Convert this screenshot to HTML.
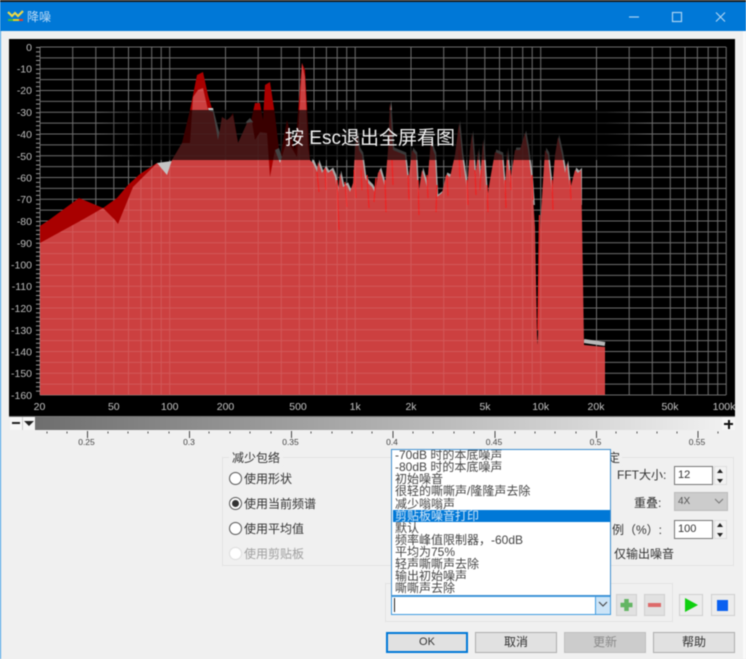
<!DOCTYPE html>
<html><head><meta charset="utf-8">
<style>
html,body{margin:0;padding:0;width:746px;height:659px;overflow:hidden;background:#f0f0f0}
body{position:relative;font-family:"Liberation Sans","Noto Sans CJK SC",sans-serif;font-size:12px;color:#333}
#w{position:absolute;left:0;top:0;width:746px;height:659px;filter:blur(.6px)}
.a{position:absolute;white-space:nowrap}
.r{position:absolute;left:229px;width:11px;height:11px;border:1.3px solid #555;border-radius:50%;background:#fff}
.l{position:absolute;left:244px;font-size:12px;line-height:14px;color:#333;white-space:nowrap}
.it{position:absolute;left:1px;width:218px;height:13px;line-height:13px;font-size:12px;padding-left:2px;color:#444;white-space:nowrap}
.b{position:absolute;top:632px;height:19px;width:80px;background:#e1e1e1;border:1px solid #adadad;text-align:center;line-height:19px;font-size:12px;color:#333}
.sq{position:absolute;top:594px;background:#e1e1e1;border:1px solid #cfcfcf;box-sizing:border-box;height:22px}
.sp{position:absolute;left:714px;width:13px;height:19px;background:#f2f2f2;border:1px solid #ddd;box-sizing:border-box}
.in{position:absolute;left:674px;width:39px;height:19px;background:#fff;border:1px solid #777;box-sizing:border-box;font-size:11px;line-height:17px;padding-left:3px;color:#333}
</style></head>
<body><div id="w">
<div class="a" style="left:0;top:0;width:746px;height:2px;background:#1c1c1c"></div>
<div class="a" style="left:0;top:2px;width:746px;height:29px;background:#0078d7"></div>
<div class="a" style="left:0;top:31px;width:1px;height:628px;background:#3f9fe8"></div>
<div class="a" style="left:743px;top:31px;width:3px;height:628px;background:#fafafa"></div>
<svg class="a" style="left:7px;top:9px" width="18" height="15" viewBox="0 0 18 15"><path d="M1 3 L5 7 L8 4 L11 7 L16 2" fill="none" stroke="#e8d84a" stroke-width="2.2"/><path d="M1 11 H6" stroke="#3fbf3f" stroke-width="2"/><path d="M6 11 H12" stroke="#e8d020" stroke-width="2"/><path d="M12 11 H16" stroke="#e04030" stroke-width="2"/></svg>
<div class="a" style="left:27px;top:9px;color:#b9d9f4;font-size:12px;line-height:16px">降噪</div>
<svg class="a" style="left:620px;top:8px" width="120" height="18" viewBox="0 0 120 18"><g fill="none" stroke="#a9d3f3" stroke-width="1.2"><path d="M9 9 H19"/><rect x="52.500" y="4.500" width="9" height="9"/><path d="M96 4.500 L105 13.500 M105 4.500 L96 13.500"/></g></svg>

<svg class="a" style="left:9px;top:39px" width="726" height="377" viewBox="9 39 726 377">
<defs>
<path id="g" d="M40 47V395M72.700 47V395M95.800 47V395M113.800 47V395M128.500 47V395M140.900 47V395M151.700 47V395M161.200 47V395M169.700 47V395M225.500 47V395M258.200 47V395M281.300 47V395M299.300 47V395M314 47V395M326.400 47V395M337.200 47V395M346.700 47V395M355.200 47V395M411 47V395M443.700 47V395M466.800 47V395M484.800 47V395M499.500 47V395M511.900 47V395M522.700 47V395M532.200 47V395M540.700 47V395M596.500 47V395M629.200 47V395M652.300 47V395M670.300 47V395M685 47V395M697.400 47V395M708.200 47V395M717.700 47V395M726.200 47V395M40 47H726M40 57.900H726M40 68.750H726M40 79.600H726M40 90.500H726M40 101.400H726M40 112.250H726M40 123.100H726M40 134H726M40 144.900H726M40 155.750H726M40 166.600H726M40 177.500H726M40 188.400H726M40 199.250H726M40 210.100H726M40 221H726M40 231.900H726M40 242.750H726M40 253.600H726M40 264.500H726M40 275.400H726M40 286.250H726M40 297.100H726M40 308H726M40 318.900H726M40 329.750H726M40 340.600H726M40 351.500H726M40 362.400H726M40 373.250H726M40 384.100H726M40 395H726"/>
<polygon id="lp" points="40,243 82,220 103,208 115,220 118,224 133,187 157,163 167,175 172,160 182,143 190,143 193,97 198,90 203,88 208,110 213,112 218,140 222,117 227,120 233,115 238,143 247,123 252,122 255,140 260,132 267,133 270,177 275,150 280,163 287,140 297,157 302,63 305,77 308,147 310,160 313,163 317,172 318,162 322,173 325,168 328,173 332,170 335,177 338,193 340,173 343,187 347,185 350,192 353,183 355,150 357,133 359,150 362,155 365,178 368,183 372,187 375,193 378,173 380,170 385,187 388,150 390,103 393,150 405,155 408,183 412,150 416,155 418,197 422,170 427,187 431,140 433,150 435,155 437,197 442,193 446,175 450,177 455,155 459,123 462,155 467,190 470,150 472,133 474,160 475,180 478,150 480,180 483,140 487,200 490,180 495,152 502,155 505,193 507,150 510,183 515,150 520,150 525,133 528,150 532,183 535,227 537,335 537.500,345 538,335 540,230 545,150 548,155 552,193 555,155 558,137 562,155 565,173 567,163 570,190 575,170 578,173 581,170 582,220 584,345 605,347 605,395 40,395"/>
<clipPath id="cp"><use href="#lp"/></clipPath>
<clipPath id="cg"><rect x="312" y="40" width="270" height="165"/></clipPath>
<linearGradient id="ov" x1="0" x2="1" y1="0" y2="0"><stop offset="0" stop-color="#000" stop-opacity="0"/><stop offset=".1" stop-color="#000" stop-opacity=".66"/><stop offset=".92" stop-color="#000" stop-opacity=".66"/><stop offset="1" stop-color="#000" stop-opacity="0"/></linearGradient>
</defs>
<rect x="9" y="39" width="726" height="377" fill="#000"/>
<use href="#g" fill="none" stroke="#6e6e6e" stroke-width="1"/>
<path d="M38 47V395" stroke="#999" stroke-width="4" stroke-dasharray="1 3.350" fill="none"/>

<!-- grey tips behind the jagged region -->
<g clip-path="url(#cg)"><use href="#lp" fill="#c4c4c4" opacity=".85" transform="translate(1.200 -2.500)"/></g>

<!-- dark red -->
<polygon fill="#a80000" points="40,226 49,220 79,198 103,208 117,198 128,185 140,174 157,163 167,175 172,160 182,143 190,110 197,75 203,72 208,95 213,112 218,145 222,117 227,122 233,113 239,148 245,130 250,125 255,103 260,103 263,120 265,85 270,82 275,115 280,158 287,120 295,150 302,63 305,70 310,160 310,395 40,395"/>
<polygon fill="#c4c4c4" points="157,163 172,161 172,176 157,176"/>
<polygon fill="#c4c4c4" points="208,108 213,108 220,135 218,142"/>
<polygon fill="#c4c4c4" points="246,122 250,118 253,122 249,126"/>
<polygon fill="#c4c4c4" points="275,150 279,148 283,160 280,165"/>
<path d="M584 341 L605 344" stroke="#b8b8b8" stroke-width="4" fill="none"/>

<!-- main light red -->
<use href="#lp" fill="#cc4040"/>

<!-- bright red streaks -->
<path d="M317 172L319 192M325 168L326 190M337 180L339 230M345 182L347 207M354 170L356 198M361 170L362 190M367 175L369 208M376 178L374 202M385 180L386 212M392 160L393 185M408 175L409 200M418 180L419 215M427 175L428 198M437 185L436 212M447 175L448 196M459 150L460 178M467 180L468 205M475 170L476 195M481 170L480 190M487 185L488 212M505 180L506 208M510 170L511 190M532 175L533 200M539.500 215L538 330M552 180L553 210M570 180L571 200" stroke="#ee2222" stroke-width="1.200" fill="none"/>

<!-- grid above red -->
<use href="#g" fill="none" stroke="#fff" stroke-opacity=".13" stroke-width="1" clip-path="url(#cp)"/>

<!-- overlay -->
<rect x="95" y="110" width="555" height="50" fill="url(#ov)"/>
<text x="285" y="144" font-family="Liberation Sans,Noto Sans CJK SC,sans-serif" font-size="19" fill="#f2f2f2">按 Esc退出全屏看图</text>

<g font-family="Liberation Sans,sans-serif" font-size="10.500" fill="#bdbdbd" text-anchor="end">
<text x="32" y="51">0</text><text x="32" y="72.500">-10</text><text x="32" y="94">-20</text><text x="32" y="116">-30</text><text x="32" y="138">-40</text><text x="32" y="160">-50</text><text x="32" y="181.500">-60</text><text x="32" y="203">-70</text><text x="32" y="225">-80</text><text x="32" y="247">-90</text><text x="32" y="268.500">-100</text><text x="32" y="290">-110</text><text x="32" y="312">-120</text><text x="32" y="334">-130</text><text x="32" y="355.500">-140</text><text x="32" y="377">-150</text><text x="32" y="399">-160</text>
</g>
<g font-family="Liberation Sans,sans-serif" font-size="10.500" fill="#c4c4c4" text-anchor="middle">
<text x="39.500" y="410">20</text><text x="113.800" y="410">50</text><text x="169.700" y="410">100</text><text x="225.500" y="410">200</text><text x="298" y="410">500</text><text x="355.200" y="410">1k</text><text x="411" y="410">2k</text><text x="485" y="410">5k</text><text x="540.700" y="410">10k</text><text x="596" y="410">20k</text><text x="670" y="410">50k</text><text x="724" y="410">100k</text>
</g>
</svg>

<!-- slider row -->
<div class="a" style="left:9px;top:416px;width:726px;height:1px;background:#777"></div>
<div class="a" style="left:35px;top:417px;width:687px;height:13px;background:linear-gradient(90deg,#6e6e6e,#f0f0f0)"></div>
<div class="a" style="left:10px;top:417px;width:12px;height:13px;background:#f6f6f6;border-right:1px solid #ccc"></div>
<div class="a" style="left:12px;top:422px;width:8px;height:2px;background:#222"></div>
<div class="a" style="left:23px;top:417px;width:12px;height:13px;background:#f6f6f6"></div>
<div class="a" style="left:24px;top:421px;width:0;height:0;border-left:5px solid transparent;border-right:5px solid transparent;border-top:5px solid #222"></div>
<div class="a" style="left:722px;top:417px;width:13px;height:13px;background:#f6f6f6"></div>
<div class="a" style="left:724px;top:423px;width:9px;height:2px;background:#111"></div>
<div class="a" style="left:727.500px;top:419.500px;width:2px;height:9px;background:#111"></div>

<svg class="a" style="left:0;top:430px" width="746" height="20" viewBox="0 430 746 20">
<path d="M47 431.500v2M67 431.500v2M108 431.500v2M128 431.500v2M148 431.500v2M169 431.500v2M209 431.500v2M230 431.500v2M250 431.500v2M271 431.500v2M311 431.500v2M332 431.500v2M352 431.500v2M372 431.500v2M413 431.500v2M433 431.500v2M454 431.500v2M474 431.500v2M515 431.500v2M535 431.500v2M555 431.500v2M576 431.500v2M616 431.500v2M637 431.500v2M657 431.500v2M677 431.500v2M718 431.500v2" stroke="#555" fill="none"/>
<path d="M87.500 431v7M189.500 431v7M291.500 431v7M393 431v7M495 431v7M596.500 431v7M698 431v7" stroke="#444" fill="none"/>
<g font-family="Liberation Sans,sans-serif" font-size="8.500" fill="#444" text-anchor="middle">
<text x="86.500" y="445">0.25</text><text x="189" y="445">0.3</text><text x="290.500" y="445">0.35</text><text x="392" y="445">0.4</text><text x="494" y="445">0.45</text><text x="595.500" y="445">0.5</text><text x="697" y="445">0.55</text>
</g></svg>

<!-- groups -->
<div class="a" style="left:222px;top:457px;width:512px;height:109px;border:1px solid #e3e3e3;box-sizing:border-box"></div>
<div class="a" style="left:229px;top:451px;background:#f0f0f0;padding:0 3px;font-size:12px;line-height:15px;color:#333">减少包络</div>
<div class="a" style="left:606px;top:451px;background:#f0f0f0;padding:0 2px;font-size:12px;line-height:15px;color:#333">定</div>

<div class="r" style="top:472px"></div><div class="l" style="top:472px">使用形状</div>
<div class="r" style="top:497px"></div><div class="a" style="left:232px;top:500px;width:7px;height:7px;border-radius:50%;background:#333"></div><div class="l" style="top:497px">使用当前频谱</div>
<div class="r" style="top:522px"></div><div class="l" style="top:522px">使用平均值</div>
<div class="r" style="top:547px;border-color:#ddd"></div><div class="l" style="top:547px;color:#a0a0a0">使用剪贴板</div>

<div class="a" style="left:617px;top:468px;font-size:12px;line-height:15px">FFT大小:</div>
<div class="in" style="top:466px">12</div>
<div class="sp" style="top:466px"></div>
<div class="a" style="left:717px;top:469px;border:3px solid transparent;border-top:0;border-bottom:4px solid #222"></div>
<div class="a" style="left:717px;top:479px;border:3px solid transparent;border-bottom:0;border-top:4px solid #222"></div>
<div class="a" style="left:634px;top:496px;font-size:12px;line-height:15px">重叠:</div>
<div class="a" style="left:674px;top:492px;width:54px;height:19px;background:#ccc;border:1px solid #bbb;box-sizing:border-box;font-size:10px;line-height:17px;padding-left:3px;color:#555">4X</div>
<svg class="a" style="left:712px;top:496px" width="14" height="10"><path d="M3 3L7 7L11 3" fill="none" stroke="#777"/></svg>
<div class="a" style="left:612px;top:523px;font-size:12px;line-height:15px">例（%）:</div>
<div class="in" style="top:520px">100</div>
<div class="sp" style="top:520px"></div>
<div class="a" style="left:717px;top:523px;border:3px solid transparent;border-top:0;border-bottom:4px solid #222"></div>
<div class="a" style="left:717px;top:533px;border:3px solid transparent;border-bottom:0;border-top:4px solid #222"></div>
<div class="a" style="left:610px;top:547px;width:1px;height:13px;background:#666"></div>
<div class="a" style="left:614px;top:547px;font-size:12px;line-height:14px">仅输出噪音</div>

<!-- preset group -->
<div class="a" style="left:385px;top:583px;width:288px;height:39px;border:1px solid #e3e3e3;box-sizing:border-box"></div>
<div class="a" style="left:391px;top:596px;width:220px;height:19px;background:#fff;border:1px solid #3f9be0;box-sizing:border-box"></div>
<div class="a" style="left:394px;top:598px;width:1px;height:14px;background:#222"></div>
<div class="a" style="left:595px;top:596px;width:16px;height:19px;background:#cce4f7;border:1px solid #3f9be0;box-sizing:border-box"></div>
<svg class="a" style="left:596px;top:600px" width="14" height="10"><path d="M3 2L7 6L11 2" fill="none" stroke="#444" stroke-width="1.100"/></svg>

<!-- dropdown -->
<div class="a" style="left:391px;top:449px;width:220px;height:147px;background:#fff;border:1px solid #3f8fd0;box-sizing:border-box;overflow:hidden">
<div class="it" style="top:-1px">-70dB 时的本底噪声</div>
<div class="it" style="top:11px">-80dB 时的本底噪声</div>
<div class="it" style="top:23px">初始噪音</div>
<div class="it" style="top:35px">很轻的嘶嘶声/隆隆声去除</div>
<div class="it" style="top:47.500px">减少嗡嗡声</div>
<div class="it" style="top:60px;background:#0078d7;color:#cfe6f8;height:12px;line-height:12px;width:217px">剪贴板噪音打印</div>
<div class="it" style="top:72px">默认</div>
<div class="it" style="top:84px">频率峰值限制器，-60dB</div>
<div class="it" style="top:96px">平均为75%</div>
<div class="it" style="top:108px">轻声嘶嘶声去除</div>
<div class="it" style="top:120px">输出初始噪声</div>
<div class="it" style="top:132px">嘶嘶声去除</div>
</div>

<!-- icon buttons -->
<div class="sq" style="left:616px;width:21px"></div>
<svg class="a" style="left:616px;top:594px" width="21" height="22"><path d="M10.500 5V17M4.500 11H16.500" stroke="#63b563" stroke-width="4.500" fill="none"/></svg>
<div class="sq" style="left:644px;width:21px"></div>
<div class="a" style="left:648px;top:603px;width:13px;height:4px;background:#dd6a6a"></div>
<div class="sq" style="left:679px;width:24px;background:#ececec"></div>
<svg class="a" style="left:679px;top:594px" width="24" height="22"><path d="M6 4L19 11L6 18Z" fill="#0fd00f"/></svg>
<div class="sq" style="left:711px;width:24px;background:#ececec"></div>
<div class="a" style="left:717px;top:600px;width:11px;height:11px;background:#0a60f0"></div>

<!-- bottom buttons -->
<div class="b" style="left:386px;border:2px solid #0078d7;width:78px;height:17px;line-height:17px;font-size:11px">OK</div>
<div class="b" style="left:475px">取消</div>
<div class="b" style="left:564px;background:#ccc;border-color:#bfbfbf;color:#8a8a8a">更新</div>
<div class="b" style="left:653px">帮助</div>
</div></body></html>
